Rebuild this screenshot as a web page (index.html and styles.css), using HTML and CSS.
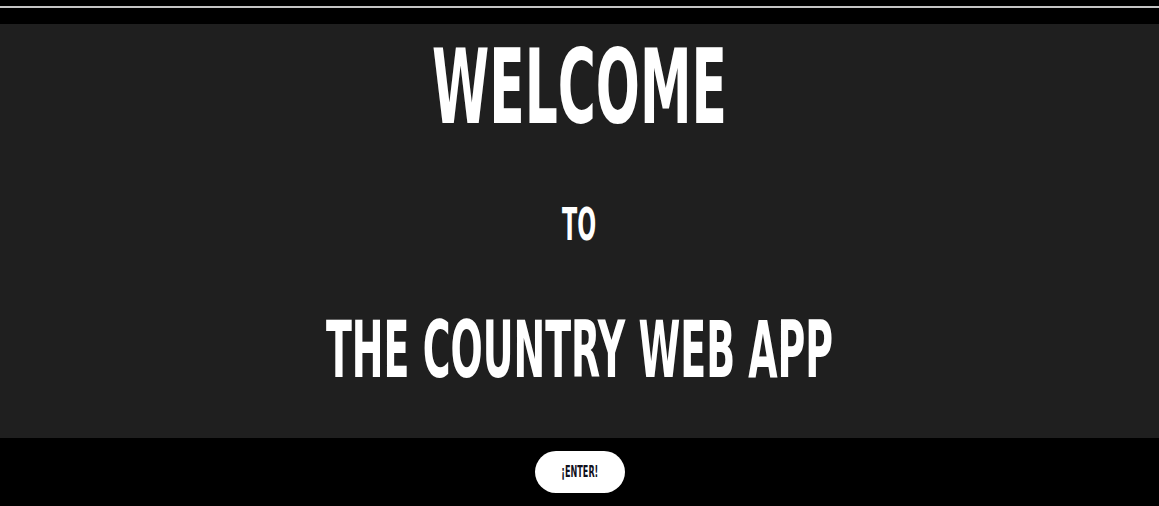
FILE: index.html
```html
<!DOCTYPE html>
<html lang="en">
<head>
<meta charset="utf-8">
<title>The Country Web App</title>
<link rel="stylesheet" href="styles.css">
</head>
<body>
  <header class="topbar">
    <div class="topbar-line"></div>
  </header>
  <main class="hero">
    <h1 class="title title-xl"><span class="squeeze s-xl">WELCOME</span></h1>
    <h2 class="title title-sm"><span class="squeeze s-sm">TO</span></h2>
    <h2 class="title title-lg"><span class="squeeze s-lg">THE COUNTRY WEB APP</span></h2>
  </main>
  <footer class="footer">
    <button class="enter-btn" type="button"><span class="squeeze s-btn">¡ENTER!</span></button>
  </footer>
</body>
</html>
```

FILE: styles.css
```css
* { box-sizing: border-box; }

html, body {
  margin: 0;
  padding: 0;
  background: #000;
}

body {
  width: 1159px;
  height: 506px;
  overflow: hidden;
  font-family: "DejaVu Sans Condensed", "DejaVu Sans", sans-serif;
  font-stretch: condensed;
  font-weight: bold;
}

.topbar {
  height: 24px;
  padding-top: 6px;
  background: #000;
}

.topbar-line {
  height: 2px;
  background: #c4c4c4;
}

.hero {
  height: 414px;
  background: #1f1f1f;
  display: flex;
  flex-direction: column;
  align-items: center;
  padding-top: 12px;
  color: #fff;
}

.title {
  margin: 0;
  font-weight: bold;
  line-height: 1;
  text-align: center;
  white-space: nowrap;
}

.title-xl { font-size: 103px; }
.title-sm { font-size: 45px; margin-top: 63px; }
.title-lg { font-size: 78px; margin-top: 64px; }

.squeeze {
  display: inline-block;
  transform-origin: center;
}

.s-xl { transform: scaleX(0.56); }
.s-sm { transform: scaleX(0.55); }
.s-lg { transform: scaleX(0.54); }
.s-btn { transform: scaleX(0.6); }

.footer {
  height: 68px;
  display: flex;
  justify-content: center;
  padding-top: 13px;
}

.enter-btn {
  width: 90px;
  height: 42px;
  border: none;
  border-radius: 21px;
  background: #fff;
  color: #10101c;
  font-family: inherit;
  font-weight: bold;
  font-size: 15px;
  line-height: 1;
  padding: 0;
  display: flex;
  align-items: center;
  justify-content: center;
  white-space: nowrap;
  cursor: pointer;
}
```
